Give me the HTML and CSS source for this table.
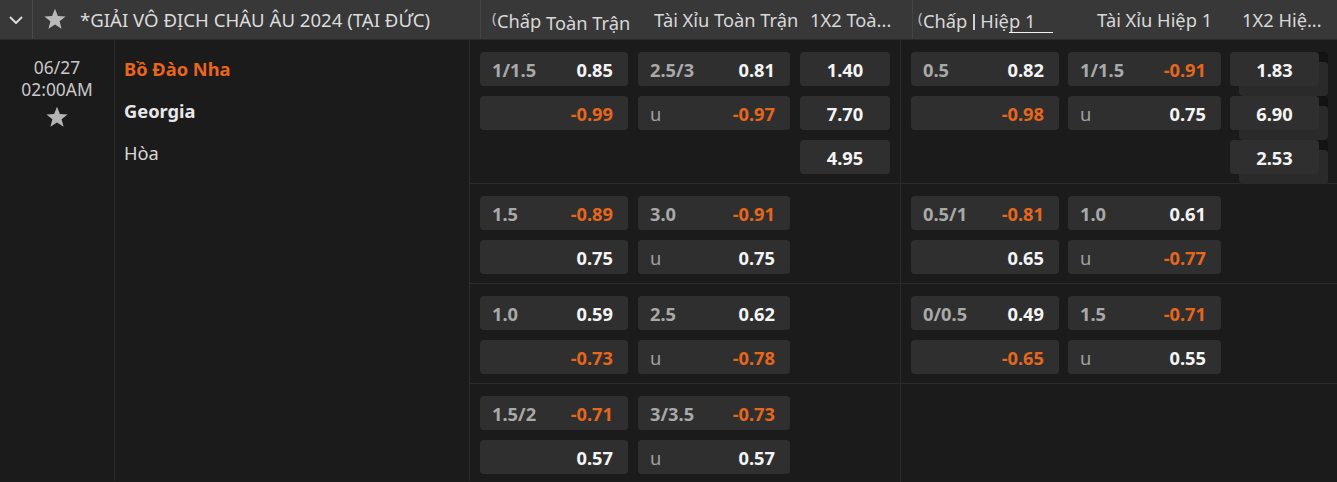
FILE: index.html
```html
<!DOCTYPE html>
<html lang="vi">
<head>
<meta charset="utf-8">
<title>Odds</title>
<link rel="stylesheet" href="styles.css">
</head>
<body>
<div class="page">
  <div class="header">
    <div class="hd-toggle">
      <svg width="14" height="9" viewBox="0 0 14 9"><path d="M1.5 1.5 L7 7 L12.5 1.5" fill="none" stroke="#e0e0e0" stroke-width="1.8" stroke-linecap="round" stroke-linejoin="round"/></svg>
    </div>
    <div class="hd-league">
      <svg class="hd-star" width="24" height="23" viewBox="0 0 24 23"><path d="M12 0.8 L14.9 8 L22.6 8.4 L16.6 13.3 L18.6 20.8 L12 16.6 L5.4 20.8 L7.4 13.3 L1.4 8.4 L9.1 8 Z" fill="#b9b9b9"/></svg>
      <span class="hd-title">*GIẢI VÔ ĐỊCH CHÂU ÂU 2024 (TẠI ĐỨC)</span>
    </div>
    <div class="hd-cols">
      <div class="hd-half">
        <div class="hd-col c-hdp"><span class="clip">(</span>Chấp <span class="tab-active top">Toàn Trận</span></div>
        <div class="hd-col c-ou">Tài Xỉu Toàn Trận</div>
        <div class="hd-col c-1x2">1X2 Toà...</div>
      </div>
      <div class="hd-half second">
        <div class="hd-col c-hdp"><span class="clip">(</span>Chấp<span class="bar"></span><span class="tab-active bottom">Hiệp 1</span></div>
        <div class="hd-col c-ou">Tài Xỉu Hiệp 1</div>
        <div class="hd-col c-1x2">1X2 Hiệ...</div>
      </div>
    </div>
  </div>

  <div class="body">
    <div class="time-col">
      <div class="date">06/27</div>
      <div class="time">02:00AM</div>
      <svg class="fav" width="24" height="23" viewBox="0 0 24 23"><path d="M12 0.8 L14.9 8 L22.6 8.4 L16.6 13.3 L18.6 20.8 L12 16.6 L5.4 20.8 L7.4 13.3 L1.4 8.4 L9.1 8 Z" fill="#b3b3b3"/></svg>
    </div>
    <div class="team-col">
      <div class="team home">Bồ Đào Nha</div>
      <div class="team away">Georgia</div>
      <div class="team draw">Hòa</div>
    </div>
    <div class="odds-col">
      <div class="group">
        <div class="half">
          <div class="cell"><span class="lbl">1/1.5</span><span class="val">0.85</span></div>
          <div class="cell"><span class="lbl">2.5/3</span><span class="val">0.81</span></div>
          <div class="cell c"><span class="val">1.40</span></div>
          <div class="cell"><span class="lbl"></span><span class="val neg">-0.99</span></div>
          <div class="cell"><span class="lbl u">u</span><span class="val neg">-0.97</span></div>
          <div class="cell c"><span class="val">7.70</span></div>
          <div class="empty"></div>
          <div class="empty"></div>
          <div class="cell c"><span class="val">4.95</span></div>
        </div>
        <div class="half second">
          <div class="cell"><span class="lbl">0.5</span><span class="val">0.82</span></div>
          <div class="cell"><span class="lbl">1/1.5</span><span class="val neg">-0.91</span></div>
          <div class="cell c edge"><span class="val">1.83</span></div>
          <div class="cell"><span class="lbl"></span><span class="val neg">-0.98</span></div>
          <div class="cell"><span class="lbl u">u</span><span class="val">0.75</span></div>
          <div class="cell c edge"><span class="val">6.90</span></div>
          <div class="empty"></div>
          <div class="empty"></div>
          <div class="cell c edge"><span class="val">2.53</span></div>
        </div>
      </div>

      <div class="group">
        <div class="half">
          <div class="cell"><span class="lbl">1.5</span><span class="val neg">-0.89</span></div>
          <div class="cell"><span class="lbl">3.0</span><span class="val neg">-0.91</span></div>
          <div class="empty"></div>
          <div class="cell"><span class="lbl"></span><span class="val">0.75</span></div>
          <div class="cell"><span class="lbl u">u</span><span class="val">0.75</span></div>
          <div class="empty"></div>
        </div>
        <div class="half second">
          <div class="cell"><span class="lbl">0.5/1</span><span class="val neg">-0.81</span></div>
          <div class="cell"><span class="lbl">1.0</span><span class="val">0.61</span></div>
          <div class="empty"></div>
          <div class="cell"><span class="lbl"></span><span class="val">0.65</span></div>
          <div class="cell"><span class="lbl u">u</span><span class="val neg">-0.77</span></div>
          <div class="empty"></div>
        </div>
      </div>

      <div class="group">
        <div class="half">
          <div class="cell"><span class="lbl">1.0</span><span class="val">0.59</span></div>
          <div class="cell"><span class="lbl">2.5</span><span class="val">0.62</span></div>
          <div class="empty"></div>
          <div class="cell"><span class="lbl"></span><span class="val neg">-0.73</span></div>
          <div class="cell"><span class="lbl u">u</span><span class="val neg">-0.78</span></div>
          <div class="empty"></div>
        </div>
        <div class="half second">
          <div class="cell"><span class="lbl">0/0.5</span><span class="val">0.49</span></div>
          <div class="cell"><span class="lbl">1.5</span><span class="val neg">-0.71</span></div>
          <div class="empty"></div>
          <div class="cell"><span class="lbl"></span><span class="val neg">-0.65</span></div>
          <div class="cell"><span class="lbl u">u</span><span class="val">0.55</span></div>
          <div class="empty"></div>
        </div>
      </div>

      <div class="group">
        <div class="half">
          <div class="cell"><span class="lbl">1.5/2</span><span class="val neg">-0.71</span></div>
          <div class="cell"><span class="lbl">3/3.5</span><span class="val neg">-0.73</span></div>
          <div class="empty"></div>
          <div class="cell"><span class="lbl"></span><span class="val">0.57</span></div>
          <div class="cell"><span class="lbl u">u</span><span class="val">0.57</span></div>
          <div class="empty"></div>
        </div>
        <div class="half second">
          <div class="empty tall"></div>
        </div>
      </div>
    </div>
  </div>
</div>
</body>
</html>
```

FILE: styles.css
```css
* { box-sizing: border-box; }
html, body { margin: 0; padding: 0; }
body {
  background: #1b1b1b;
  font-family: "Noto Sans", "Open Sans", "Liberation Sans", sans-serif;
  color: #e6e6e6;
  width: 1337px;
  height: 482px;
  overflow: hidden;
}
.page { width: 1337px; }

.header {
  display: flex;
  height: 40px;
  background: #383838;
  border-bottom: 1px solid #2a2a2a;
  align-items: stretch;
}
.hd-toggle {
  width: 33px;
  border-right: 1px solid #4a4a4a;
  display: flex;
  align-items: center;
  justify-content: center;
  padding-top: 2px;
}
.hd-league {
  width: 448px;
  display: flex;
  align-items: center;
  padding-left: 10px;
  border-right: 1px solid #454545;
}
.hd-star { margin-right: 13px; }
.hd-title {
  font-size: 18.6px;
  color: #dcdcdc;
  white-space: nowrap;
}
.hd-cols { display: flex; flex: 1; }
.hd-half {
  display: flex;
  align-items: center;
  width: 431px;
  font-size: 18.3px;
  color: #d8d8d8;
  white-space: nowrap;
}
.hd-half.second { border-left: 1px solid #454545; width: 425px; }
.hd-col { position: relative; }
.hd-half .c-hdp { width: 163px; padding-left: 11px; }
.hd-half .c-ou { width: 158px; padding-left: 10px; }
.hd-half .c-1x2 { padding-left: 8px; }
.hd-half.second .c-hdp { width: 174px; padding-left: 5px; }
.hd-half.second .c-ou { width: 155px; padding-left: 10px; }
.hd-half.second .c-1x2 { padding-left: 0; }
.clip { display: inline-block; width: 5px; overflow: hidden; color: #bdbdbd; font-size: 15px; vertical-align: 1px; }
.bar {
  display: inline-block;
  width: 2px;
  height: 16px;
  background: #cfcfcf;
  margin: 0 5px 0 6px;
  vertical-align: -2px;
}
.tab-active { position: relative; }
.tab-active.top { top: 2px; }
.tab-active.top::before {
  content: "";
  position: absolute;
  left: 49px;
  top: -22px;
  width: 42px;
  height: 3px;
  background: #f2f2f2;
}
.tab-active.bottom::after {
  content: "";
  position: absolute;
  left: 29px;
  bottom: 0;
  width: 44px;
  height: 1px;
  background: #f2f2f2;
}

.body { display: flex; height: 441px; }
.time-col {
  width: 115px;
  border-right: 1px solid #2e2e2e;
  display: flex;
  flex-direction: column;
  align-items: center;
  padding-top: 16px;
  color: #c9c9c9;
  font-size: 17.4px;
  line-height: 22px;
}
.fav { margin-top: 6px; }
.team-col {
  width: 355px;
  border-right: 1px solid #2e2e2e;
  padding-top: 16px;
  padding-left: 9px;
  font-size: 18.3px;
}
.team { height: 42px; line-height: 26px; }
.team.home { color: #e8661d; font-weight: 700; }
.team.away { color: #e8e8e8; font-weight: 700; }
.team.draw { color: #d6d6d6; }

.odds-col { flex: 1; display: flex; flex-direction: column; }
.group {
  display: flex;
  border-bottom: 1px solid #2b2b2b;
}
.half {
  width: 430px;
  display: grid;
  grid-template-columns: 148px 152px 90px;
  grid-auto-rows: 34px;
  column-gap: 10px;
  row-gap: 10px;
  padding: 12px 10px 9px;
}
.half.second {
  border-left: 1px solid #2b2b2b;
  grid-template-columns: 148px 153px 89px;
  column-gap: 9px;
  width: 437px;
}
.cell {
  background: #2f2f2f;
  border-radius: 4px;
  display: flex;
  align-items: center;
  justify-content: space-between;
  padding: 0 15px 0 12px;
  font-size: 18.3px;
  font-weight: 700;
}
.cell.c { justify-content: center; padding: 0; }
.cell.edge { box-shadow: 9px 10px 0 0 #2a2a2a, 9px 0 0 0 #131313, 9px 10px 0 0 #131313; }
.lbl { color: #a9a9a9; }
.lbl.u { font-weight: 400; color: #a0a0a0; }
.val { color: #f4f4f4; }
.val.neg { color: #e5661d; }
.empty.tall { grid-column: 1 / 4; grid-row: 1 / 3; }
```
